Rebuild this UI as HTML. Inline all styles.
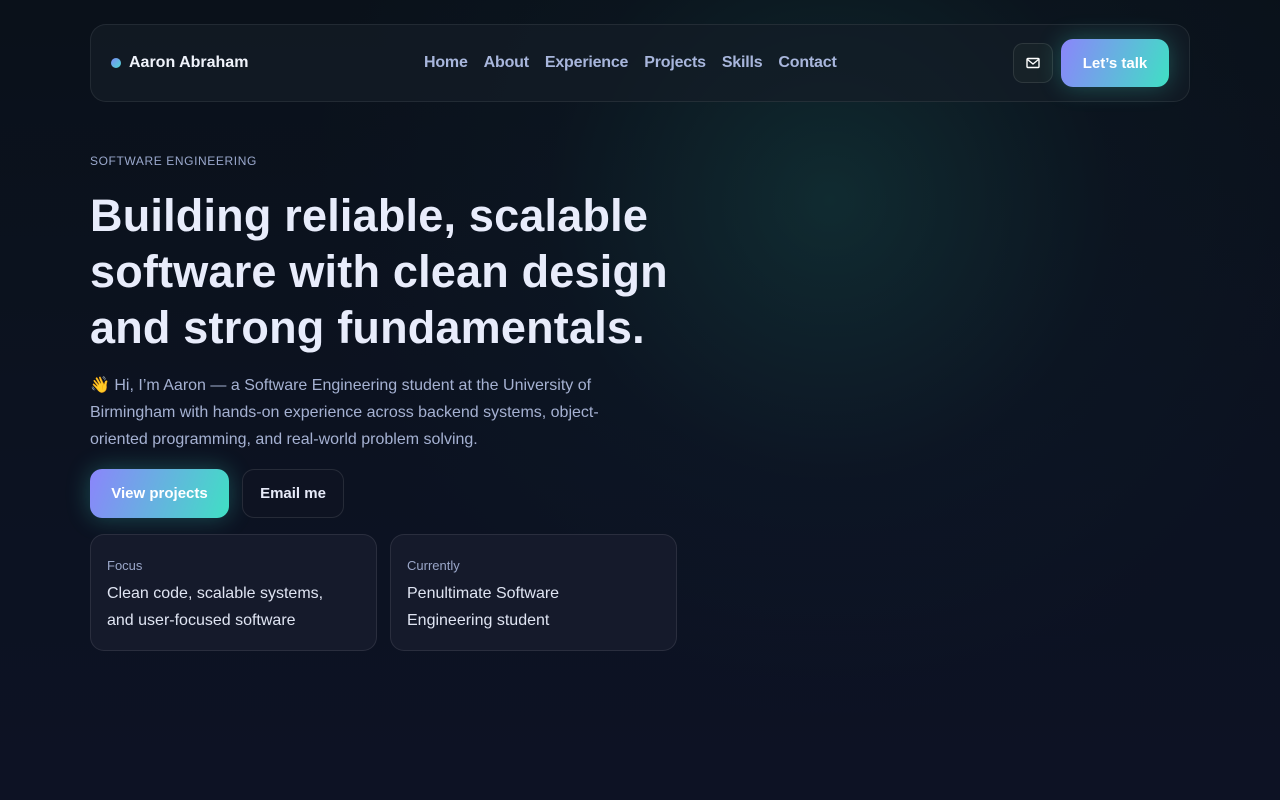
<!DOCTYPE html>
<html><head><meta charset="utf-8"><style>
*{box-sizing:border-box;margin:0;padding:0}
body{width:1280px;height:800px;overflow:hidden;font-family:"Liberation Sans",sans-serif;color:#e6eaf8;
background:radial-gradient(circle at 830px 200px,rgba(30,110,100,.28),rgba(20,60,70,.08) 280px,transparent 520px),linear-gradient(180deg,#0a111a 0%,#0c1221 60%,#0d1224 100%);position:relative}
.nav{position:absolute;left:90px;top:24px;width:1100px;height:78px;border:1px solid rgba(255,255,255,.08);border-radius:16px;background:rgba(20,28,38,.7)}
.brand{position:absolute;left:20px;top:29px;font-weight:bold;font-size:16px;color:#f0f3fb;display:flex;align-items:center;gap:8px}
.dot{width:10px;height:10px;border-radius:50%;background:linear-gradient(135deg,#7c8cf8,#4fd8d0)}
.links{position:absolute;left:333px;top:29px;display:flex;gap:16px;font-size:16px;color:#a8b6dc;font-weight:bold;letter-spacing:-.2px}
.mail{position:absolute;left:922px;top:18px;width:40px;height:40px;border:1px solid rgba(255,255,255,.1);border-radius:10px;background:#172228;display:flex;align-items:center;justify-content:center}
.grad{background:linear-gradient(110deg,#8b85fb,#3fe0c4);color:#fff;font-weight:bold;border-radius:12px;box-shadow:0 0 24px rgba(60,220,200,.3)}
.talk{position:absolute;left:970px;top:14px;width:108px;height:48px;display:flex;align-items:center;justify-content:center;font-size:15px}
.eyebrow{position:absolute;left:90px;top:154px;font-size:12px;letter-spacing:.6px;color:#9aa8cc}
h1{position:absolute;left:90px;top:188px;font-size:45px;line-height:56px;font-weight:bold;color:#e8ecfb;width:640px;letter-spacing:.2px}
.p{position:absolute;left:90px;top:372px;width:545px;font-size:16px;line-height:27px;color:#a5b1d2}
.b1{position:absolute;left:90px;top:469px;width:139px;height:49px;display:flex;align-items:center;justify-content:center;font-size:15px}
.b2{position:absolute;left:242px;top:469px;width:102px;height:49px;border:1px solid rgba(255,255,255,.1);border-radius:12px;display:flex;align-items:center;justify-content:center;font-size:15px;font-weight:bold;background:#0e1322}
.card{position:absolute;top:534px;width:287px;height:117px;border:1px solid rgba(255,255,255,.09);border-radius:14px;background:#151a2b;padding:23px 16px}
.card small{display:block;font-size:13px;color:#9aa6c8;margin-bottom:7px}
.card div{font-size:16px;line-height:27px;color:#dfe4f2;width:235px}
</style></head><body>
<div class="nav">
<div class="brand"><span class="dot"></span>Aaron Abraham</div>
<div class="links"><span>Home</span><span>About</span><span>Experience</span><span>Projects</span><span>Skills</span><span>Contact</span></div>
<div class="mail"><svg width="14" height="12" viewBox="0 0 14 12"><rect x="1" y="1.5" width="12" height="9" rx="1" fill="none" stroke="#fff" stroke-width="1.4"/><path d="M1.5 2.5L7 7l5.5-4.5" fill="none" stroke="#fff" stroke-width="1.4"/></svg></div>
<div class="talk grad">Let’s talk</div>
</div>
<div class="eyebrow">SOFTWARE ENGINEERING</div>
<h1>Building reliable, scalable software with clean design and strong fundamentals.</h1>
<div class="p">👋 Hi, I’m Aaron — a Software Engineering student at the University of Birmingham with hands-on experience across backend systems, object-oriented programming, and real-world problem solving.</div>
<div class="b1 grad">View projects</div>
<div class="b2">Email me</div>
<div class="card" style="left:90px"><small>Focus</small><div>Clean code, scalable systems, and user-focused software</div></div>
<div class="card" style="left:390px"><small>Currently</small><div>Penultimate Software Engineering student</div></div>
</body></html>
